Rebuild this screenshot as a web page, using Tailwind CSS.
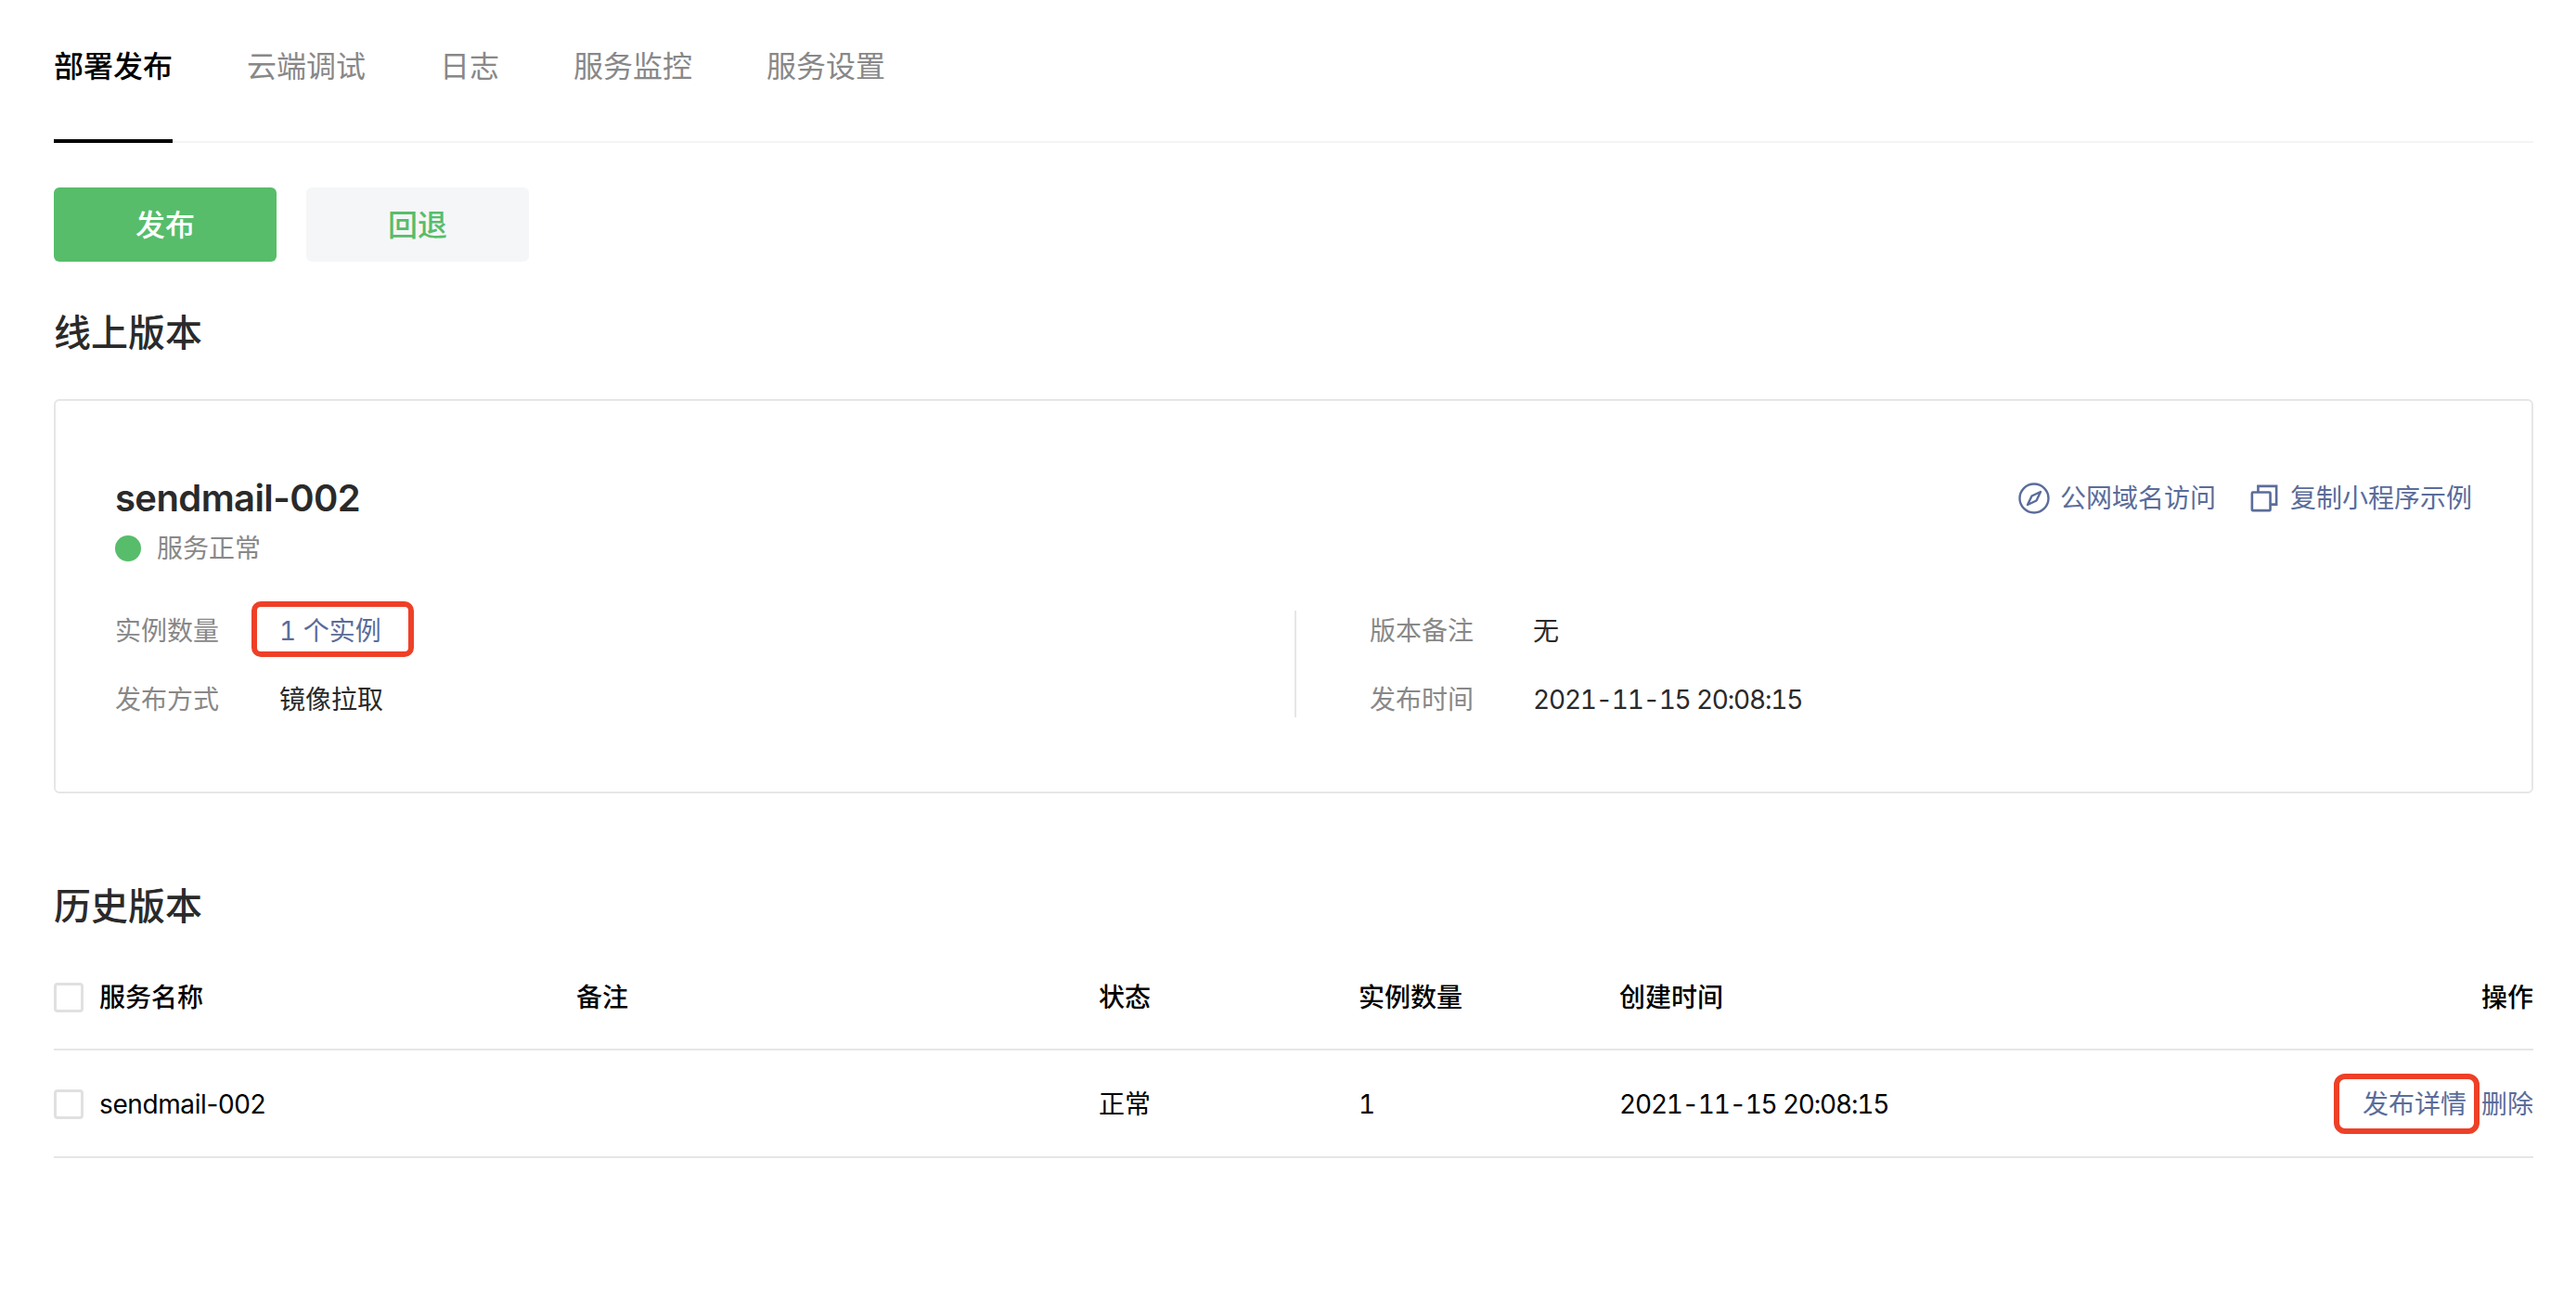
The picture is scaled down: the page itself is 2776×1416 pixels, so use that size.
<!DOCTYPE html>
<html lang="zh-CN">
<head>
    <meta charset="UTF-8">
    <title>部署发布</title>
    <script src="https://cdn.jsdelivr.net/npm/@tailwindcss/browser@4"></script>
</head>
<body class="bg-white font-['Inter','Noto_Sans_CJK_SC',sans-serif] text-[28px] text-[#2a2a2a]">
    <div class="pl-[58px] pr-[46px]">

        <!-- Tabs -->
        <div class="flex gap-[80px] h-[154px] border-b-2 border-[#f3f4f6] text-[32px] leading-[44px] text-[#888888]">
            <div class="h-[154px] pt-[50px] border-b-4 border-black text-black font-medium">部署发布</div>
            <div class="pt-[50px]">云端调试</div>
            <div class="pt-[50px]">日志</div>
            <div class="pt-[50px]">服务监控</div>
            <div class="pt-[50px]">服务设置</div>
        </div>

        <!-- Buttons -->
        <div class="flex gap-[32px] mt-[48px]">
            <button class="w-[240px] h-[80px] pt-[2px] rounded-md bg-[#57bd6a] text-white text-[32px] font-medium">发布</button>
            <button class="w-[240px] h-[80px] pt-[2px] rounded-md bg-[#f5f6f8] text-[#57bd6a] text-[32px] font-medium">回退</button>
        </div>

        <h2 class="mt-[49px] text-[40px] leading-[56px] font-medium">线上版本</h2>

        <!-- Online version card -->
        <div class="mt-[43px] h-[425px] border-2 border-[#e6e6e6] rounded-md pt-[77px] px-[64px]">
            <div class="flex justify-between items-center">
                <div class="text-[40px] leading-[56px] font-semibold tracking-[-0.6px]">sendmail-002</div>
                <div class="flex items-center text-[#5a6c9a]">
                    <svg class="w-[34px] h-[34px]" viewBox="0 0 34 34" fill="none" stroke="#5a6c9a" stroke-width="2.4">
                        <circle cx="17" cy="17" r="15.5"/>
                        <path d="M24 10 L19.5 19.5 L10 24 L14.5 14.5 Z" stroke-linejoin="round"/>
                    </svg>
                    <span class="ml-[11px]">公网域名访问</span>
                    <svg class="w-[30px] h-[30px] ml-[37px]" viewBox="0 0 32 32" fill="none" stroke="#5a6c9a" stroke-width="2.8">
                        <rect x="2" y="9" width="21" height="21" rx="1"/>
                        <path d="M9 9 V2 H30 V23 H23"/>
                    </svg>
                    <span class="ml-[13px]">复制小程序示例</span>
                </div>
            </div>
            <div class="flex items-center mt-[6px] h-[40px] text-[#888888]">
                <span class="w-[28px] h-[28px] rounded-full bg-[#57bd6a]"></span>
                <span class="ml-[17px]">服务正常</span>
            </div>
            <div class="flex mt-[47px]">
                <div class="w-[1271px]">
                    <div class="flex h-[44px] items-center">
                        <span class="w-[177px] text-[#888888]">实例数量</span>
                        <span class="relative text-[#5a6c9a] tabular-nums">1 个实例
                            <span class="absolute left-[-30px] top-[-11px] w-[175px] h-[60px] border-[6px] border-[#ee4027] rounded-[10px]"></span>
                        </span>
                    </div>
                    <div class="flex h-[44px] items-center mt-[30px]">
                        <span class="w-[177px] text-[#888888]">发布方式</span>
                        <span>镜像拉取</span>
                    </div>
                </div>
                <div class="border-l-2 border-[#e6e6e6] pl-[79px] h-[115px]">
                    <div class="flex h-[44px] items-center">
                        <span class="w-[176px] text-[#888888]">版本备注</span>
                        <span>无</span>
                    </div>
                    <div class="flex h-[44px] items-center mt-[30px]">
                        <span class="w-[176px] text-[#888888]">发布时间</span>
                        <span class="tabular-nums tracking-[-1.2px]">2021-11-15 20:08:15</span>
                    </div>
                </div>
            </div>
        </div>

        <h2 class="mt-[94px] text-[40px] leading-[56px] font-medium">历史版本</h2>

        <!-- History table -->
        <div class="mt-[14px] h-[113px] grid grid-cols-[563px_563px_280px_281px_1fr_auto] items-center border-b-2 border-[#e6e6e6] text-black font-medium">
            <div class="flex items-center">
                <span class="w-[32px] h-[32px] border-[3px] border-[#e0e0e0] rounded-[4px]"></span>
                <span class="ml-[17px]">服务名称</span>
            </div>
            <div>备注</div>
            <div>状态</div>
            <div>实例数量</div>
            <div>创建时间</div>
            <div>操作</div>
        </div>
        <div class="h-[116px] pt-[2px] grid grid-cols-[563px_563px_280px_281px_1fr_auto] items-center border-b-2 border-[#e6e6e6] text-black">
            <div class="flex items-center">
                <span class="w-[32px] h-[32px] border-[3px] border-[#e0e0e0] rounded-[4px]"></span>
                <span class="ml-[17px] tracking-[-0.4px]">sendmail-002</span>
            </div>
            <div></div>
            <div>正常</div>
            <div class="tabular-nums">1</div>
            <div class="tabular-nums tracking-[-1.2px]">2021-11-15 20:08:15</div>
            <div class="flex gap-[16px] text-[#5a6c9a]">
                <span class="relative">发布详情
                    <span class="absolute left-[-31px] top-[-12px] w-[157px] h-[65px] border-[6px] border-[#ee4027] rounded-[12px]"></span>
                </span>
                <span>删除</span>
            </div>
        </div>
    </div>
</body>
</html>
